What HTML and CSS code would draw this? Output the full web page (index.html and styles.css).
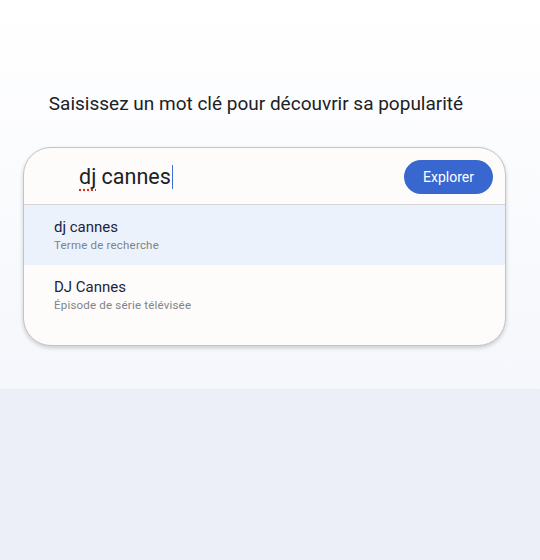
FILE: index.html
```html
<!DOCTYPE html>
<html lang="fr">
<head>
  <meta charset="UTF-8">
  <title>Explorer</title>
  <link rel="stylesheet" href="styles.css">
</head>
<body>

  <div class="hero">
    <h1 class="title">Saisissez un mot clé pour découvrir sa popularité</h1>

    <div class="search-card">
      <div class="search-row">
        <div class="query"><span class="typo">dj</span> cannes<span class="caret"></span></div>
        <button class="explore">Explorer</button>
      </div>
      <ul class="suggestions">
        <li class="suggestion active">
          <div class="name">dj cannes</div>
          <div class="kind">Terme de recherche</div>
        </li>
        <li class="suggestion">
          <div class="name">DJ Cannes</div>
          <div class="kind">Épisode de série télévisée</div>
        </li>
      </ul>
    </div>
  </div>

  <div class="lower"></div>

</body>
</html>
```

FILE: styles.css
```css
body {
  margin: 0;
  font-family: Roboto, "Liberation Sans", sans-serif;
  background: #eceff8;
}
.hero {
  height: 389px;
  background: linear-gradient(#ffffff, #f5f7fc);
  padding-top: 92px;
  box-sizing: border-box;
}
.title {
  margin: 0 0 31px 0;
  font-size: 19px;
  font-weight: 400;
  line-height: 24px;
  color: #202124;
  text-align: center;
  padding-right: 28px;
}
.search-card {
  width: 483px;
  margin-left: 23px;
  box-sizing: border-box;
  background: #fdfcfa;
  border: 1px solid #c4c4c6;
  border-radius: 28px;
  box-shadow: 0 2px 4px rgba(0,0,0,0.18);
  overflow: hidden;
}
.search-row {
  height: 56px;
  display: flex;
  align-items: center;
  justify-content: space-between;
  padding: 0 12px 0 55px;
  border-bottom: 1px solid #d4d4d6;
}
.query {
  font-size: 21.5px;
  line-height: 28px;
  color: #202124;
  margin-top: 2px;
  white-space: pre;
}
.typo {
  text-decoration: underline dotted #d93025;
  text-underline-offset: 5px;
}
.caret {
  display: inline-block;
  width: 1px;
  height: 24px;
  background: #3b6fd4;
  margin-left: 1px;
  vertical-align: -5px;
}
.explore {
  font-family: inherit;
  font-size: 14px;
  color: #ffffff;
  background: #3867d0;
  border: none;
  border-radius: 18px;
  width: 89px;
  height: 34px;
  margin-top: 1px;
}
.suggestions {
  list-style: none;
  margin: 0;
  padding: 0 0 22px 0;
}
.suggestion {
  padding: 0 30px;
  height: 60px;
  display: flex;
  flex-direction: column;
  justify-content: center;
  gap: 2px;
}
.suggestion + .suggestion {
  height: 58px;
  padding-top: 2px;
  box-sizing: border-box;
}
.suggestion.active {
  background: #ebf2fc;
}
.name {
  font-size: 15px;
  line-height: 18px;
  color: #1c2340;
}
.kind {
  font-size: 11.5px;
  line-height: 15px;
  color: #7f8389;
  letter-spacing: 0.2px;
}
.lower {
  height: 171px;
}
```
